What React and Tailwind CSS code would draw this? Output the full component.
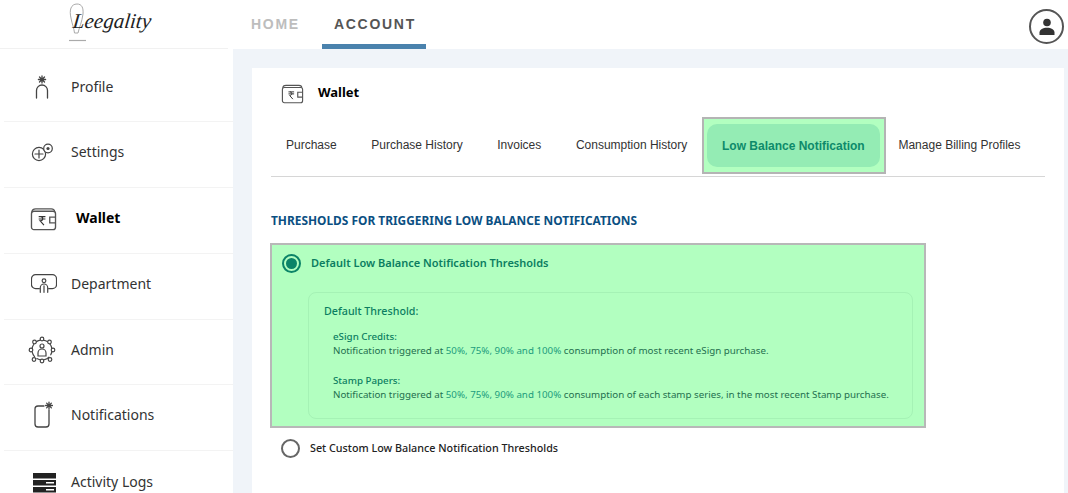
const ink = "#444"

function Svg({ children, w = 28, h = 28, vb = "0 0 28 28" }) {
  return (
    <svg width={w} height={h} viewBox={vb} fill="none" stroke={ink} strokeWidth="1.2" strokeLinecap="round">
      {children}
    </svg>
  )
}

function Star({ x, y, r = 4 }) {
  return (
    <g stroke={ink} strokeWidth="1.3">
      <path d={`M${x} ${y - r}V${y + r}M${x - r} ${y}H${x + r}M${x - r * 0.7} ${y - r * 0.7}L${x + r * 0.7} ${y + r * 0.7}M${x + r * 0.7} ${y - r * 0.7}L${x - r * 0.7} ${y + r * 0.7}`} />
    </g>
  )
}

function ProfileIcon() {
  return (
    <Svg>
      <Star x={14} y={6.5} r={3.6} />
      <path d="M8.5 25V17.5a5.5 5.5 0 0 1 11 0V25" strokeWidth="1.3" />
    </Svg>
  )
}

function SettingsIcon() {
  return (
    <Svg>
      <circle cx="11" cy="16" r="6.6" />
      <path d="M11 12V20M7 16H15" />
      <circle cx="20" cy="10.5" r="4.3" fill="#fff" />
      <circle cx="20" cy="10.5" r="1.6" fill={ink} stroke="none" />
    </Svg>
  )
}

function WalletIcon({ w = 28, h = 26, className = "" }) {
  return (
    <svg width={w} height={h} viewBox="0 0 28 26" fill="none" stroke="#555" strokeWidth="1.4" className={className}>
      <path d="M2 6.5C2 4 3.5 3 6 3H22C24 3 25.5 4 25.5 6" />
      <rect x="1.5" y="5.5" width="25" height="19" rx="2.5" />
      <path d="M26.5 11.5H20.5V17.5H26.5" />
      <path d="M9 11H16M9 13.5H16M11 11C14 11 14 15.5 10.5 15.5L14.5 20" strokeWidth="1.2" stroke="#333" />
    </svg>
  )
}

function SideWalletIcon() {
  return <WalletIcon w={27} h={25} className="translate-x-[2px]" />
}

function DepartmentIcon() {
  return (
    <svg width="26" height="26" viewBox="0 0 28 28" fill="none" stroke={ink} strokeWidth="1.3" strokeLinecap="round" className="translate-x-[2px]">
      <path d="M9 19H5a4.500 4.500 0 0 1-4.500-4.500V8.500A4.500 4.500 0 0 1 5 4H23a4.500 4.500 0 0 1 4.500 4.500V14.500A4.500 4.500 0 0 1 23 19H19" />
      <circle cx="14" cy="10.500" r="2" />
      <path d="M10 23V18a4 4 0 0 1 8 0V23M14 16V23" />
    </svg>
  )
}

function AdminIcon() {
  const dots = [[14, 3], [6.500, 6], [21.500, 6], [3, 14], [25, 14], [6, 23.500], [22, 23.500], [14, 25]]
  return (
    <Svg>
      <circle cx="14" cy="14" r="10" strokeDasharray="5 3" />
      {dots.map(([x, y]) => (
        <circle key={x + "-" + y} cx={x} cy={y} r="1.800" fill="#fff" />
      ))}
      <circle cx="14" cy="10" r="2" />
      <path d="M10 20V17a4 4 0 0 1 8 0V20Z" />
    </Svg>
  )
}

function NotificationsIcon() {
  return (
    <Svg>
      <path d="M16 5H10a3 3 0 0 0-3 3V23a3 3 0 0 0 3 3H18a3 3 0 0 0 3-3V9" strokeWidth="1.300" />
      <Star x={21} y={4.500} r={3.400} />
    </Svg>
  )
}

function LogsIcon() {
  return (
    <svg width="28" height="28" viewBox="0 0 28 28" fill="#222">
      <rect x="5" y="6" width="23" height="5.500" />
      <rect x="5" y="13" width="23" height="5.500" />
      <rect x="5" y="20" width="23" height="5.500" />
      <rect x="18" y="15" width="8" height="1.500" fill="#fff" />
      <rect x="18" y="22" width="8" height="1.500" fill="#fff" />
    </svg>
  )
}

function AvatarIcon() {
  return (
    <svg width="22" height="22" viewBox="0 0 22 22" fill="#333">
      <circle cx="11" cy="6.500" r="3.800" />
      <path d="M3.500 19V16.500C3.500 13.500 7 11.800 11 11.800S18.500 13.500 18.500 16.500V19Z" />
    </svg>
  )
}

const sideItems = [
  { label: "Profile", Icon: ProfileIcon },
  { label: "Settings", Icon: SettingsIcon },
  { label: "Wallet", Icon: SideWalletIcon, active: true },
  { label: "Department", Icon: DepartmentIcon },
  { label: "Admin", Icon: AdminIcon },
  { label: "Notifications", Icon: NotificationsIcon },
  { label: "Activity Logs", Icon: LogsIcon },
]

const tabs = ["Purchase", "Purchase History", "Invoices", "Consumption History"]

function Sidebar() {
  return (
    <aside className="w-[233px] shrink-0 bg-white">
      <div className="h-[49px] w-[228px] border-b border-[#f1f1f1] flex items-center justify-center pr-[8px]">
        <div className="relative flex items-center h-full pl-[4px] pb-[6px]">
          <svg width="20" height="40" viewBox="0 0 20 40" fill="none" stroke="#aaa" strokeWidth="1" className="absolute -left-[1px] top-[2px]">
            <path d="M9 2C3 2 1 8 3 16C4 22 6 26 6.500 31H10C11 26 14 20 15 12C15.500 6 14 2 9 2Z" />
            <path d="M1 38.500H18" strokeWidth="1.200" />
          </svg>
          <span className="relative text-[21px] leading-none italic text-[#222] [font-family:'Liberation_Serif',serif] -skew-x-6">Leegality</span>
        </div>
      </div>
      <nav className="pl-1 pt-[7.500px]">
        {sideItems.map(({ label, Icon, active }) => (
          <div key={label} className="h-[65.800px] border-b border-[#f3f3f3] flex items-start pt-[16px] last:border-b-0">
            <span className="w-[67px] shrink-0 h-[28px] flex justify-center pl-[8px] items-center">
              <Icon />
            </span>
            <span className={active
              ? "pl-[5px] text-[14px] leading-[28px] font-bold text-black [font-family:'Noto_Sans',sans-serif]"
              : "text-[14px] leading-[28px] text-[#333] [font-family:'Noto_Sans',sans-serif] " + (label === "Activity Logs" ? "pt-[1px]" : "")}>
              {label}
            </span>
          </div>
        ))}
      </nav>
    </aside>
  )
}

function Topbar() {
  return (
    <header className="h-[49px] bg-white flex items-stretch pl-[18px] pr-1 [font-family:'Liberation_Sans',sans-serif]">
      <span className="w-[50px] pt-[15px] text-[14px] leading-[18px] font-bold tracking-[1.700px] text-[#bdbdbd]">HOME</span>
      <span className="ml-[21px] w-[104px] pl-3 pt-[15px] border-b-[5px] border-[#4a82ad] text-[14px] leading-[18px] font-bold tracking-[1.700px] text-[#555]">ACCOUNT</span>
      <span className="ml-auto mt-[9px] w-[35px] h-[35px] rounded-full border-2 border-[#555] flex items-center justify-center">
        <AvatarIcon />
      </span>
    </header>
  )
}

function Tabs() {
  return (
    <div className="ml-[19px] mr-[19px] h-[60px] border-b border-[#d6d6d6] flex items-start gap-[34.600px] pl-[15px] text-[12px] text-[#333] [font-family:'Liberation_Sans',sans-serif]">
      {tabs.map((t) => (
        <span key={t} className="leading-[57px]">{t}</span>
      ))}
      <span className="-ml-[20px] -mr-[22px] w-[184px] h-[57px] shrink-0 border-2 border-[#b4b4b4] bg-[#b2ffc0] pl-[3px] pr-[4px] py-[5px]">
        <span className="flex h-full rounded-[10px] bg-[#94ecb4] items-center justify-center font-bold text-[#0d8a6a]">Low Balance Notification</span>
      </span>
      <span className="leading-[57px]">Manage Billing Profiles</span>
    </div>
  )
}

function ThresholdBox() {
  return (
    <div className="mt-[15px] ml-[18px] w-[656px] h-[185px] border-2 border-[#b8b8b8] bg-[#b2ffc0] [font-family:'Noto_Sans',sans-serif] text-[#0b7d60]">
      <div className="h-[35px] flex items-center pl-[10px] pt-[2px]">
        <span className="w-[19px] h-[19px] rounded-full border-2 border-[#0b8468] flex items-center justify-center">
          <span className="w-[11px] h-[11px] rounded-full bg-[#0b8468]" />
        </span>
        <span className="ml-[10px] text-[11px] font-semibold">Default Low Balance Notification Thresholds</span>
      </div>
      <div className="ml-[36px] mr-[11px] mt-[12px] h-[127px] rounded-lg border border-[#a5f2b5] pl-[15px] pt-[10px]">
        <p className="text-[10.700px] leading-[16px] font-medium">Default Threshold:</p>
        <div className="pl-[9px] mt-[11px] text-[9.750px] leading-[14px] text-[#1f6f4f]">
          <p className="text-[#0b7d60] font-medium">eSign Credits:</p>
          <p>Notification triggered at <span className="text-[#1c9c7c]">50%, 75%, 90% and 100%</span> consumption of most recent eSign purchase.</p>
          <p className="mt-[16px] text-[#0b7d60] font-medium">Stamp Papers:</p>
          <p>Notification triggered at <span className="text-[#1c9c7c]">50%, 75%, 90% and 100%</span> consumption of each stamp series, in the most recent Stamp purchase.</p>
        </div>
      </div>
    </div>
  )
}

export default function App() {
  return (
    <div className="w-[1068px] h-[493px] overflow-hidden flex bg-[#f0f4f9]">
      <Sidebar />
      <main className="flex-1 min-w-0">
        <Topbar />
        <section className="ml-[19px] mr-1 mt-[19px] h-[425px] bg-white">
          <div className="h-[49px] flex items-center pl-[29px] pt-[1px]">
            <WalletIcon w={23} h={21} />
            <span className="ml-[14px] text-[13px] font-bold text-black [font-family:'Noto_Sans',sans-serif]">Wallet</span>
          </div>
          <Tabs />
          <h2 className="mt-[35px] ml-[19px] text-[11.900px] leading-[16px] font-bold text-[#0b4f82] [font-family:'Noto_Sans',sans-serif]">
            THRESHOLDS FOR TRIGGERING LOW BALANCE NOTIFICATIONS
          </h2>
          <ThresholdBox />
          <div className="mt-[11px] ml-[29px] flex items-center">
            <span className="w-[19px] h-[19px] rounded-full border-2 border-[#666]" />
            <span className="ml-[10px] text-[10.750px] font-medium text-[#222] [font-family:'Noto_Sans',sans-serif]">Set Custom Low Balance Notification Thresholds</span>
          </div>
        </section>
      </main>
    </div>
  )
}
